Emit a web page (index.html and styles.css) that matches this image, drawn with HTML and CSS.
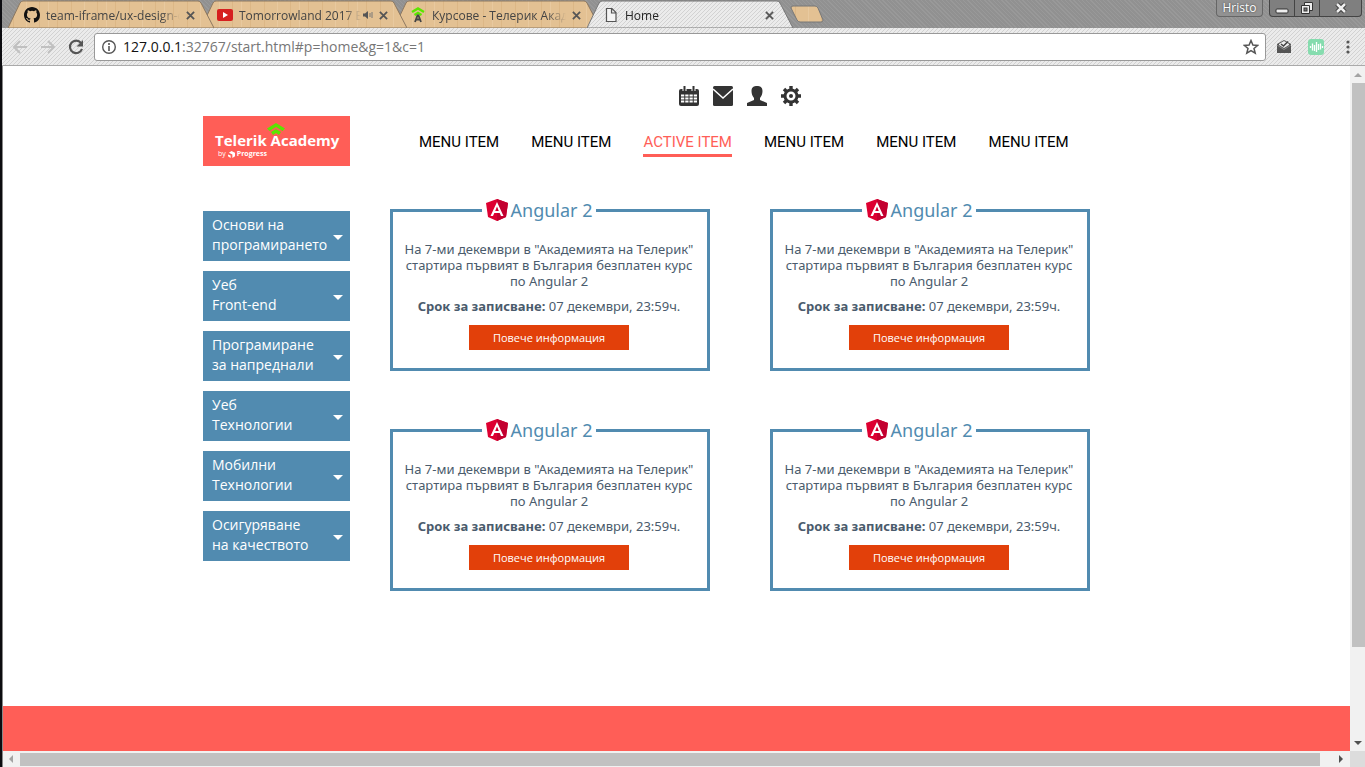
FILE: index.html
```html
<!DOCTYPE html>
<html lang="bg">
<head>
<meta charset="utf-8">
<title>Home</title>
<link rel="stylesheet" href="styles.css">
</head>
<body>
<svg class="defs" aria-hidden="true">
  <defs>
    <pattern id="wood" width="58" height="28" patternUnits="userSpaceOnUse">
      <rect width="58" height="28" fill="#e3c193"/>
      <path d="M5.500 0V28M31.500 0V28M49.500 0V28" stroke="#dcb786"/>
      <path d="M18.500 0V28M40.500 0V28" stroke="#e8c99f"/>
    </pattern>
    <pattern id="hatch" width="4" height="4" patternUnits="userSpaceOnUse">
      <rect width="4" height="4" fill="#ebebeb"/>
      <path d="M-1 1L1 -1M0 4L4 0M3 5L5 3" stroke="#d2d2d2"/>
    </pattern>
    <symbol id="tab-shape" viewBox="0 0 206 28">
      <path d="M0 28L12 3Q13 1 15 1H190Q192 1 193 3L206 28Z"/>
    </symbol>
    <symbol id="close" viewBox="0 0 10 10"><path d="M1 1L9 9M9 1L1 9" stroke="#555" stroke-width="2"/></symbol>
    <symbol id="angular" viewBox="0 0 22 22">
      <path d="M11 0L22 4L20 18L11 22L2 18L0 4Z" fill="#dd0031"/>
      <path d="M11 0L22 4L20 18L11 22Z" fill="#c3002f"/>
      <path fill-rule="evenodd" d="M11 3L17.500 17H15L13.700 14H8.300L7 17H4.500ZM11 7.500L9.200 12H12.800Z" fill="#fff"/>
    </symbol>
  </defs>
</svg>

<div class="window">
  <header class="chrome">
    <div class="tabstrip">
      <div class="tab">
        <svg class="tab-bg"><use href="#tab-shape"/></svg>
        <svg class="tab-icon" viewBox="0 0 16 16"><path fill="#111" d="M8 0C3.580 0 0 3.580 0 8c0 3.540 2.290 6.530 5.470 7.590.4.070.55-.17.55-.38v-1.490c-2.010.37-2.530-.49-2.690-.94-.09-.23-.48-.94-.82-1.130-.28-.15-.68-.52-.01-.53.63-.01 1.080.58 1.230.82.720 1.210 1.870.87 2.330.66.070-.52.280-.87.510-1.070-1.780-.2-3.640-.89-3.640-3.950 0-.87.310-1.590.82-2.150-.08-.2-.36-1.020.08-2.120 0 0 .67-.21 2.200.82a7.600 7.600 0 014 0c1.530-1.040 2.200-.82 2.200-.82.440 1.100.160 1.920.080 2.120.510.560.820 1.270.820 2.150 0 3.070-1.870 3.750-3.650 3.950.290.250.540.730.540 1.480v2.190c0 .210.150.460.550.380A8 8 0 0016 8c0-4.420-3.580-8-8-8z"/></svg>
        <span class="tab-title">team-iframe/ux-design-c</span>
        <button class="tab-close" aria-label="Close tab"><svg><use href="#close"/></svg></button>
      </div>
      <div class="tab">
        <svg class="tab-bg"><use href="#tab-shape"/></svg>
        <svg class="tab-icon" viewBox="0 0 16 16"><rect y="2" width="16" height="12" rx="2" fill="#d6201f"/><path d="M6 5L11 8L6 11Z" fill="#fff"/></svg>
        <span class="tab-title">Tomorrowland 2017 B</span>
        <svg class="sound" viewBox="0 0 10 10"><path d="M0 3.500H2L5 1V9L2 6.500H0Z" fill="#555"/><path d="M7 3V7M9 2V8" stroke="#777"/></svg>
        <button class="tab-close" aria-label="Close tab"><svg><use href="#close"/></svg></button>
      </div>
      <div class="tab">
        <svg class="tab-bg"><use href="#tab-shape"/></svg>
        <svg class="tab-icon" viewBox="0 0 16 16"><path d="M2 5L8 1.500L14 5M4.500 8L8 6L11.500 8" fill="none" stroke="#5ce500" stroke-width="2.400"/><path d="M5 15L7.500 8.500H8.500L11 15M6 12.500H10" fill="none" stroke="#444" stroke-width="1.800"/></svg>
        <span class="tab-title">Курсове - Телерик Акад</span>
        <button class="tab-close" aria-label="Close tab"><svg><use href="#close"/></svg></button>
      </div>
      <div class="tab tab-active">
        <svg class="tab-bg"><use href="#tab-shape"/></svg>
        <svg class="tab-icon" viewBox="0 0 16 16"><path d="M3.500 1.500H9L13 5.500V14.500H3.500ZM8.500 1.500V6H13" fill="#f4f4f4" stroke="#555" stroke-width="1.200"/></svg>
        <span class="tab-title">Home</span>
        <button class="tab-close" aria-label="Close tab"><svg><use href="#close"/></svg></button>
      </div>
      <button class="new-tab" aria-label="New tab"><svg viewBox="0 0 34 18"><path d="M3 1H25Q27 1 28 3L33 15Q33 17 31 17H10Q8 17 7 15L1 3Q1 1 3 1Z" fill="url(#wood)" stroke="#777"/></svg></button>
      <div class="window-controls">
        <button class="profile">Hristo</button>
        <div class="sys">
          <button aria-label="Minimize"><svg viewBox="0 0 14 12"><rect x="1" y="7" width="12" height="4" rx="1" fill="#eee" stroke="#333"/></svg></button>
          <button aria-label="Restore"><svg viewBox="0 0 14 12"><path d="M4.500 .5H12.500V8.500H4.500Z" fill="#eee" stroke="#333"/><path d="M1.500 3.500H9.500V11.500H1.500Z" fill="#eee" stroke="#333"/><rect x="4" y="6" width="3" height="3" fill="#777" stroke="#333"/></svg></button>
          <button class="sys-close" aria-label="Close"><svg viewBox="0 0 14 12"><path d="M3 2L11 10M11 2L3 10" stroke="#333" stroke-width="4.500"/><path d="M3 2L11 10M11 2L3 10" stroke="#eee" stroke-width="2.500"/></svg></button>
        </div>
      </div>
    </div>
    <div class="toolbar">
      <svg class="hatch"><rect width="100%" height="100%" fill="url(#hatch)"/></svg>
      <button class="tool" aria-label="Back"><svg viewBox="0 0 16 16"><path d="M15 8H2M8 2L2 8L8 14" fill="none" stroke="#c0c0c0" stroke-width="2"/></svg></button>
      <button class="tool" aria-label="Forward"><svg viewBox="0 0 16 16"><path d="M1 8H14M8 2L14 8L8 14" fill="none" stroke="#c0c0c0" stroke-width="2"/></svg></button>
      <button class="tool" aria-label="Reload"><svg viewBox="0 0 16 16"><path d="M13 4A6.200 6.200 0 1 0 14 10" fill="none" stroke="#555" stroke-width="2.200"/><path d="M15 1V7.500H8.500Z" fill="#555"/></svg></button>
      <div class="omnibox">
        <svg class="info" viewBox="0 0 16 16"><circle cx="8" cy="8" r="6.300" fill="none" stroke="#555" stroke-width="1.400"/><path d="M8 7V12M8 4V6" stroke="#555" stroke-width="1.600"/></svg>
        <div class="url" role="textbox" aria-label="Address" tabindex="0"><span class="host">127.0.0.1</span>:32767/start.html#p=home&amp;g=1&amp;c=1</div>
        <button class="tool" aria-label="Bookmark"><svg viewBox="0 0 16 16"><path d="M8 1.500L9.900 6L14.700 6.400L11 9.500L12.200 14.200L8 11.600L3.800 14.200L5 9.500L1.300 6.400L6.100 6Z" fill="none" stroke="#555" stroke-width="1.500"/></svg></button>
      </div>
      <button class="tool ext" aria-label="Inbox"><svg viewBox="0 0 16 16"><path d="M1 5L8 1L15 5V14H1Z" fill="#555"/><path d="M3 5L8 2L13 5V6L8 9L3 6Z" fill="#eee"/><path d="M5 5L7.500 7L12 2.500" fill="none" stroke="#444" stroke-width="1.600"/><path d="M1 6L8 10.500L15 6" fill="none" stroke="#888"/></svg></button>
      <button class="tool ext" aria-label="Audio"><svg viewBox="0 0 16 16"><rect width="16" height="16" rx="3" fill="#85dcae"/><path d="M2.500 7V9M4.500 4.500V11.500M6.500 6V12M8.500 3V13M10.500 5V11M12.500 4.500V10.500M14.500 7V9" stroke="#fff" stroke-width="1.300"/></svg></button>
      <button class="tool ext" aria-label="Menu"><svg viewBox="0 0 16 16"><circle cx="8" cy="3" r="1.600" fill="#555"/><circle cx="8" cy="8" r="1.600" fill="#555"/><circle cx="8" cy="13" r="1.600" fill="#555"/></svg></button>
    </div>
  </header>

  <div class="viewport">
    <div class="page">
      <div class="container">
        <a class="logo" href="#home" aria-label="Telerik Academy by Progress">
          <svg class="logo-hat" viewBox="0 0 20 12"><path d="M1 5.500L10 0L19 5.500L16.500 8L10 4L3.500 8ZM5 9L10 6L15 9L13 12L10 10L7 12Z" fill="#5ce500"/></svg>
          <span class="logo-name">Telerik Academy</span>
          <span class="logo-by">by <svg viewBox="0 0 8 8"><path d="M1 2L4 0L8 2V6L5 8V4L1 2M0 4L3 5V8L0 6Z" fill="#fff"/></svg><b>Progress</b></span>
        </a>
        <div class="top">
          <div class="icons">
            <a href="#calendar" aria-label="Calendar"><svg viewBox="0 0 20 20"><path d="M0 5Q0 3 2 3H18Q20 3 20 5V18Q20 20 18 20H2Q0 20 0 18Z" fill="#333"/><path d="M5.500 0V5M14.500 0V5" stroke="#fff" stroke-width="4"/><path d="M5.500 0V5M14.500 0V5" stroke="#333" stroke-width="2"/><path d="M2 9.500H18M2 12.500H18M2 15.500H18" stroke="#fff" stroke-width="2" stroke-dasharray="3.250 1"/></svg></a>
            <a href="#mail" aria-label="Mail"><svg viewBox="0 0 20 20"><rect width="20" height="20" rx="1.500" fill="#333"/><path d="M0 3L10 12L20 3" fill="none" stroke="#fff" stroke-width="1.500"/></svg></a>
            <a href="#profile" aria-label="Profile"><svg viewBox="0 0 20 20"><path d="M10 0C13 0 15.500 1 15.500 5C15.500 8 14.500 10 13 12V14L20 17V20H0V17L7 14V12C5.500 10 4.500 8 4.500 5C4.500 1 7 0 10 0Z" fill="#333"/></svg></a>
            <a href="#settings" aria-label="Settings"><svg viewBox="0 0 20 20"><circle cx="10" cy="10" r="6" fill="none" stroke="#333" stroke-width="3"/><path d="M10 0V4M10 16V20M0 10H4M16 10H20M3 3L5.500 5.500M14.500 14.500L17 17M3 17L5.500 14.500M14.500 5.500L17 3" stroke="#333" stroke-width="3.400"/><circle cx="10" cy="10" r="2" fill="#333"/></svg></a>
          </div>
          <nav class="menu">
            <a href="#m1">MENU ITEM</a>
            <a href="#m2">MENU ITEM</a>
            <a class="active" href="#m3">ACTIVE ITEM</a>
            <a href="#m4">MENU ITEM</a>
            <a href="#m5">MENU ITEM</a>
            <a href="#m6">MENU ITEM</a>
          </nav>
        </div>
        <aside class="side">
          <button>Основи на<br>програмирането</button>
          <button>Уеб<br>Front-end</button>
          <button>Програмиране<br>за напреднали</button>
          <button>Уеб<br>Технологии</button>
          <button>Мобилни<br>Технологии</button>
          <button>Осигуряване<br>на качеството</button>
        </aside>
        <main class="cards">
          <article class="card">
            <h2><svg><use href="#angular"/></svg>Angular 2</h2>
            <p>На 7-ми декември в "Академията на Телерик"<br>стартира първият в България безплатен курс<br>по Angular 2</p>
            <p><b>Срок за записване:</b> 07 декември, 23:59ч.</p>
            <a class="more" href="#c1">Повече информация</a>
          </article>
          <article class="card">
            <h2><svg><use href="#angular"/></svg>Angular 2</h2>
            <p>На 7-ми декември в "Академията на Телерик"<br>стартира първият в България безплатен курс<br>по Angular 2</p>
            <p><b>Срок за записване:</b> 07 декември, 23:59ч.</p>
            <a class="more" href="#c2">Повече информация</a>
          </article>
          <article class="card">
            <h2><svg><use href="#angular"/></svg>Angular 2</h2>
            <p>На 7-ми декември в "Академията на Телерик"<br>стартира първият в България безплатен курс<br>по Angular 2</p>
            <p><b>Срок за записване:</b> 07 декември, 23:59ч.</p>
            <a class="more" href="#c3">Повече информация</a>
          </article>
          <article class="card">
            <h2><svg><use href="#angular"/></svg>Angular 2</h2>
            <p>На 7-ми декември в "Академията на Телерик"<br>стартира първият в България безплатен курс<br>по Angular 2</p>
            <p><b>Срок за записване:</b> 07 декември, 23:59ч.</p>
            <a class="more" href="#c4">Повече информация</a>
          </article>
        </main>
      </div>
      <footer class="footer"></footer>
    </div>
    <div class="vbar"><i class="arrow up"></i><i class="thumb"></i><i class="arrow down"></i></div>
    <div class="hbar"><i class="arrow left"></i><i class="thumb"></i><i class="arrow right"></i></div>
    <div class="corner"></div>
  </div>
</div>
</body>
</html>
```
FILE: styles.css
```css
* { box-sizing: border-box; }
html, body { height: 100%; }
body { margin: 0; overflow: hidden; font-family: "Open Sans", "Noto Sans", sans-serif; }
button { margin: 0; padding: 0; border: 0; background: none; font: inherit; color: inherit; cursor: pointer; }
a { color: inherit; text-decoration: none; }
svg { display: block; }
.defs { position: absolute; width: 0; height: 0; }

.window { display: flex; flex-direction: column; height: 100vh; border-left: 2px solid #0c0c10; }

/* Tab strip */
.tabstrip {
  display: flex;
  height: 28px;
  padding-left: 6px;
  background: repeating-linear-gradient(45deg, #999 0 1px, #919191 1px 3px);
}
.tab {
  position: relative;
  display: flex;
  align-items: center;
  flex: 0 0 206px;
  min-width: 0;
  margin-right: -13px;
  padding: 2px 19px 0 16px;
  font-size: 12px;
  color: #444;
}
.tab:nth-child(1) { z-index: 3; }
.tab:nth-child(2) { z-index: 2; }
.tab:nth-child(3) { z-index: 1; }
.tab-active { z-index: 4; color: #222; margin-right: 0; }
.tab-bg { position: absolute; inset: 0; z-index: -1; width: 100%; height: 28px; fill: url(#wood); stroke: #8c7861; }
.tab-active .tab-bg { fill: url(#hatch); stroke: #777; }
.tab-icon { flex: none; width: 16px; height: 16px; margin-right: 6px; }
.tab-title {
  flex: 1;
  min-width: 0;
  white-space: nowrap;
  -webkit-mask-image: linear-gradient(90deg, #000 86%, transparent);
  mask-image: linear-gradient(90deg, #000 86%, transparent);
}
.tab-close { flex: none; margin-left: 6px; }
.tab-close svg { width: 9px; height: 9px; }
.sound { flex: none; width: 10px; height: 10px; margin-left: 2px; }
.new-tab { align-self: center; margin-left: -3px; }
.new-tab svg { width: 34px; height: 18px; }

.window-controls { display: flex; align-items: flex-start; gap: 6px; margin-left: auto; padding-right: 3px; color: #fff; }
.profile {
  width: 47px;
  height: 17px;
  border: 1px solid #666;
  border-top: 0;
  border-radius: 0 0 4px 4px;
  background: #929292;
  font-size: 12px;
  line-height: 16px;
  text-shadow: 0 0 2px #333;
}
.sys { display: flex; border: 1px solid #444; border-top: 0; border-radius: 0 0 4px 4px; background: #7f7f7f; }
.sys button { display: flex; align-items: center; justify-content: center; width: 25px; height: 16px; border-right: 1px solid #444; }
.sys .sys-close { width: 41px; border: 0; }
.sys svg { width: 14px; height: 12px; }

/* Toolbar */
.toolbar {
  position: relative;
  z-index: 0;
  display: flex;
  align-items: center;
  height: 38px;
  padding: 0 11px 0 4px;
  border-bottom: 1px solid #aaa;
}
.hatch { position: absolute; inset: 0; z-index: -1; width: 100%; height: 100%; }
.tool { flex: none; width: 28px; }
.tool svg { width: 16px; height: 16px; margin: 0 auto; }
.omnibox {
  display: flex;
  flex: 1;
  align-items: center;
  height: 28px;
  margin: 0 2px 0 4px;
  border: 1px solid #999;
  border-radius: 3px;
  background: #fff;
}
.info { flex: none; width: 16px; height: 16px; margin: 0 6px; }
.url { flex: 1; font: 14px/18px "Open Sans", sans-serif; color: #777; white-space: nowrap; }
.host { color: #111; }
.ext { width: 32px; }
.ext:last-child { margin-right: -10px; }

/* Viewport with scroll bars */
.viewport {
  display: grid;
  flex: 1;
  grid-template: minmax(0, 1fr) 16px / minmax(0, 1fr) 15px;
  min-height: 0;
  border-left: 1px solid #888;
}
.vbar, .hbar { display: flex; align-items: center; background: #f1f1f1; }
.vbar { flex-direction: column; padding: 7px 0 6px; }
.vbar .thumb { width: 13px; height: 564px; margin: 6px 0 auto 2px; }
.hbar { padding: 0 7px 0 6px; }
.hbar .thumb { flex: 1; height: 13px; margin: 0 19px 0 7px; }
.thumb { background: #c1c1c1; }
.corner { background: #dcdcdc; }
.arrow { width: 0; height: 0; border: 4px solid transparent; }
.up { border-top: 0; border-bottom-color: #a3a3a3; }
.down { border-bottom: 0; border-top-color: #505050; }
.left { border-left: 0; border-right-color: #a3a3a3; }
.right { border-right: 0; border-left-color: #505050; }

/* Page */
.page { display: flex; flex-direction: column; background: #fff; overflow: hidden; }
.container {
  display: grid;
  grid-template-columns: 147px 700px;
  column-gap: 40px;
  padding: 20px 0 0 200px;
}
.logo {
  display: flex;
  flex-direction: column;
  position: relative;
  height: 50px;
  margin-top: 30px;
  padding: 14px 0 0 12px;
  background: #ff5e57;
  color: #fff;
}
.logo-hat { position: absolute; left: 63px; top: 7px; width: 20px; height: 12px; }
.logo-name { position: relative; font: 700 15px/20px "Open Sans", sans-serif; white-space: nowrap; }
.logo-by { display: flex; align-items: center; gap: 2px; padding-left: 3px; font-size: 7px; line-height: 8px; }
.logo-by svg { width: 7px; height: 7px; }

.icons { display: flex; justify-content: center; gap: 14px; }
.icons svg { width: 20px; height: 20px; }
.menu { display: flex; gap: 32px; margin-top: 26px; padding-left: 29px; font: 400 15px/20px Roboto, sans-serif; color: #000; white-space: nowrap; }
.menu a { padding-bottom: 2px; border-bottom: 3px solid transparent; }
.menu .active { color: #ff5e57; border-color: #ff5e57; }

.side { display: flex; flex-direction: column; gap: 10px; padding-top: 45px; }
.side button {
  position: relative;
  height: 50px;
  padding: 4px 9px 6px;
  background: #518bb0;
  color: #fff;
  font-size: 14px;
  line-height: 20px;
  text-align: left;
}
.side button::after {
  content: "";
  position: absolute;
  right: 7px;
  top: 24px;
  border: 5px solid transparent;
  border-top-color: #fff;
  border-bottom: 0;
}

.cards { display: grid; grid-template-columns: 320px 320px; gap: 58px 60px; padding-top: 43px; }
.card {
  display: flex;
  flex-direction: column;
  align-items: center;
  height: 162px;
  padding-right: 2px;
  border: 3px solid #518bb0;
  color: #4a5b6c;
  text-align: center;
  font: 13px/16px "Noto Sans", sans-serif;
  white-space: nowrap;
}
.card h2 {
  display: flex;
  align-items: center;
  gap: 3px;
  height: 24px;
  margin: -14px 20px 19px 0;
  padding: 0 4px;
  background: #fff;
  color: #518bb0;
  font: 400 18px/22px "Noto Sans", sans-serif;
}
.card h2 svg { width: 22px; height: 22px; }
.card p { margin: 0 0 9px; }
.more { width: 160px; height: 25px; margin-top: 2px; background: #e2400a; color: #fff; font: 11px/25px "Open Sans", sans-serif; }

.footer { height: 45px; margin-top: auto; background: #ff5e57; }
```
